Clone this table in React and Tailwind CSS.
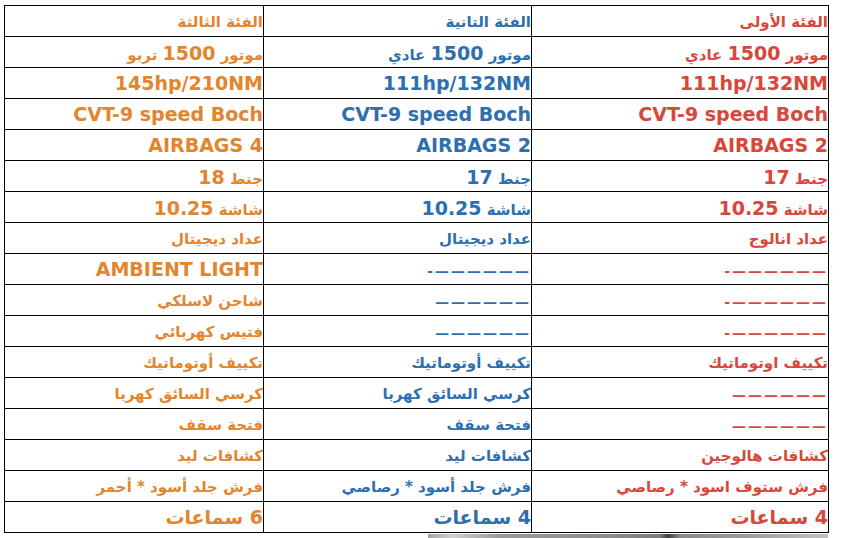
const DASH = "——————";

const rows = [
  ["الفئة الأولى", "الفئة التانية", "الفئة الثالثة"],
  ["موتور 1500 عادي", "موتور 1500 عادي", "موتور 1500 تربو"],
  ["111hp/132NM", "111hp/132NM", "145hp/210NM"],
  ["CVT-9 speed Boch", "CVT-9 speed Boch", "CVT-9 speed Boch"],
  ["AIRBAGS 2", "AIRBAGS 2", "AIRBAGS 4"],
  ["جنط 17", "جنط 17", "جنط 18"],
  ["شاشة 10.25", "شاشة 10.25", "شاشة 10.25"],
  ["عداد انالوج", "عداد ديجيتال", "عداد ديجيتال"],
  [DASH + "-", DASH + "-", "AMBIENT LIGHT"],
  [DASH + "-", DASH, "شاحن لاسلكي"],
  [DASH + "-", DASH, "فتيس كهربائي"],
  ["تكييف اوتوماتيك", "تكييف أوتوماتيك", "تكييف أوتوماتيك"],
  [DASH, "كرسي السائق كهربا", "كرسي السائق كهربا"],
  [DASH, "فتحة سقف", "فتحة سقف"],
  ["كشافات هالوجين", "كشافات ليد", "كشافات ليد"],
  ["فرش ستوف اسود * رصاصي", "فرش جلد أسود * رصاصي", "فرش جلد أسود * أحمر"],
  ["4 سماعات", "4 سماعات", "6 سماعات"],
];

const colors = ["text-[#d9473a]", "text-[#2e6fb0]", "text-[#e2852c]"];

function CellText({ text }) {
  if (text.startsWith("—")) {
    return <span className="text-[14px] tracking-[2px] pt-[3px]">{text}</span>;
  }
  if (/^[A-Za-z0-9]/.test(text)) {
    return <span className="text-[19px]">{text}</span>;
  }
  const parts = text.split(/([\d.]+)/);
  return (
    <span className="text-[15px] pt-[2px]">
      {parts.map((p, i) =>
        /\d/.test(p) ? (
          <span key={i} className="text-[19px]">{p}</span>
        ) : (
          <span key={i}>{p}</span>
        )
      )}
    </span>
  );
}

export default function App() {
  return (
    <div className="w-[844px] h-[538px] bg-white overflow-hidden font-['DejaVu_Sans',sans-serif] font-bold">
      <div
        dir="rtl"
        className="ml-[4px] mt-[5px] w-[825px] grid grid-cols-[297px_268px_259px] border-t border-r border-black"
      >
        {rows.map((row, r) =>
          row.map((cell, c) => (
            <div
              key={r + "-" + c}
              className={`h-[31px] border-b border-l border-black flex items-center justify-start whitespace-nowrap overflow-hidden leading-none ${colors[c]}`}
            >
              <CellText text={cell} />
            </div>
          ))
        )}
      </div>
      <div className="ml-[428px] mt-[1px] w-[400px] h-[5px] bg-[linear-gradient(90deg,#a5a5a5_0%,#d0d0d0_6%,#9a9a9a_18%,#8c8c8c_45%,#7c7c7c_58%,#3f3f3f_60%,#8a8a8a_63%,#9d9d9d_80%,#c2c2c2_100%)]" />
    </div>
  );
}
